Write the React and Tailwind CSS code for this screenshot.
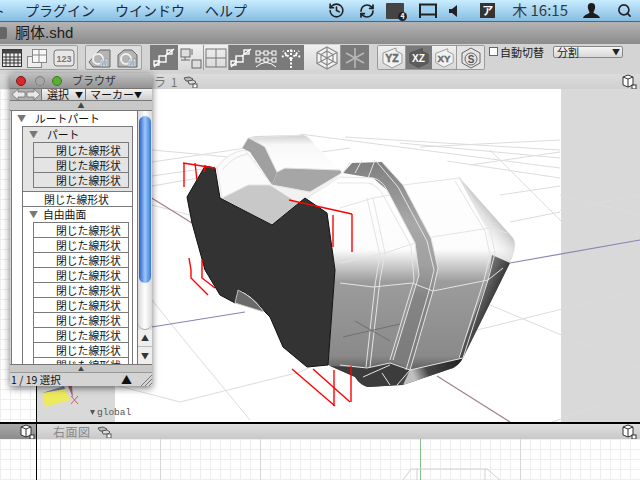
import React from 'react'
import { History, RefreshCw, Search } from 'lucide-react'

const JP = { fontFamily: '"Noto Sans CJK JP", "Liberation Sans", sans-serif' }

const LinkIcon = () => (
  <svg width="15" height="12" viewBox="0 0 15 12" fill="none" stroke="#555" strokeWidth="1">
    <path d="M1 2 L6 1 L10 3 L8 5 L3 5 Z" fill="#bbb" />
    <path d="M5 5 L10 4 L13 6 L11 8 L6 8 Z" fill="#ddd" />
    <rect x="10" y="8" width="4" height="4" fill="#fff" />
  </svg>
)

const CubeIcon = () => (
  <svg width="15" height="16" viewBox="0 0 15 16" fill="none" stroke="#333" strokeWidth="1">
    <path d="M1 3 L6 1 L11 3 L11 11 L6 13 L1 11 Z" fill="#fff" />
    <path d="M1 3 L6 5 L11 3 M6 5 L6 13" />
    <rect x="10" y="11" width="4" height="4" fill="#fff" />
  </svg>
)

const ToolBtn = ({ w = 25, dark, children }) => (
  <div
    style={{ width: w }}
    className={`h-full flex items-center justify-center border-r ${dark ? 'bg-[#7a7a7a] border-[#7a7a7a]' : 'bg-gradient-to-b from-[#f0f0f0] to-[#d8d8d8] border-[#9a9a9a]'}`}
  >
    {children}
  </div>
)

const NodeIcon = () => (
  <svg width="24" height="22" viewBox="0 0 24 22" fill="none" stroke="#fff" strokeWidth="1.4">
    <path d="M2 20 L8 14 M13 9 L22 2" />
    <rect x="7" y="9" width="7" height="6" />
    <rect x="15" y="3" width="5" height="4" />
    <rect x="2" y="14" width="5" height="4" />
  </svg>
)

const AxisIcon = ({ label, light }) => (
  <svg width="26" height="24" viewBox="0 0 26 24">
    <path d="M4 7 L17 2 L17 5 L23 8 L23 17 L13 22 L4 17 Z" fill={light ? '#5c5c5c' : '#f2f2f2'} stroke={light ? '#555' : '#999'} />
    <text x="13" y="16" textAnchor="middle" fontSize="10.5" fontWeight="700" fill={light ? '#fff' : '#777'} stroke={light ? 'none' : '#555'} strokeWidth="0.4" fontFamily="Liberation Sans">
      {label}
    </text>
  </svg>
)

const Toolbar = () => (
  <div className="h-[30px] bg-[#d4d4d4] flex pt-[1px] pb-[4px]" style={JP}>
    {/* group 1 */}
    <div className="w-[78px] h-full flex items-center border border-l-0 border-[#a0a0a0] rounded-r-[2px] bg-[#dedede] pl-[2px] gap-[5px]">
      <svg width="20" height="18" viewBox="0 0 20 18">
        <rect x="0.5" y="0.5" width="19" height="17" fill="#eee" stroke="#333" />
        <rect x="0.5" y="0.5" width="19" height="4" fill="#444" />
        <path d="M4 4 V18 M8 4 V18 M12 4 V18 M16 4 V18 M0 8 H20 M0 11 H20 M0 14 H20" stroke="#333" strokeWidth="1" />
      </svg>
      <svg width="20" height="20" viewBox="0 0 20 20" fill="#eee" stroke="#888">
        <rect x="0.5" y="8.5" width="14" height="11" />
        <rect x="5.5" y="1.5" width="14" height="13" fill="#f7f7f7" />
        <path d="M12 1 V14 M5 7 H20" />
      </svg>
      <svg width="22" height="18" viewBox="0 0 22 18" className="ml-[1px]">
        <rect x="1" y="1" width="20" height="16" rx="3" fill="#e8e8e8" stroke="#777" />
        <text x="11" y="13" fontSize="9" textAnchor="middle" fontFamily="Liberation Sans" fontWeight="700" fill="#777">123</text>
      </svg>
    </div>
    {/* group 2 */}
    <div className="w-[57px] ml-[7px] h-full flex items-center justify-center gap-[4px] border border-[#a0a0a0] rounded-[2px] bg-[#dedede]">
      {[0, 1].map((i) => (
        <svg key={i} width="24" height="22" viewBox="0 0 24 22">
          <path d={i === 0 ? 'M1 15 L12 3 L22 3 L22 20 L5 20 Z' : 'M2 8 L8 3 L16 3 L21 8 L21 20 L2 20 Z'} fill="#b4b4b4" stroke="#666" />
          <circle cx="10" cy="12" r="5" fill="none" stroke="#f0f0f0" strokeWidth="2" />
          <text x="16" y="20" fontSize="10" textAnchor="middle" fontWeight="700" fontFamily="Liberation Sans" fill="#fff" stroke="#555" strokeWidth="0.3">M</text>
        </svg>
      ))}
    </div>
    {/* group 3 */}
    <div className="ml-[8px] h-full flex bg-[#7a7a7a]">
      <ToolBtn w={28} dark><NodeIcon /></ToolBtn>
      <ToolBtn w={26}>
        <svg width="22" height="22" viewBox="0 0 22 22" fill="#ddd" stroke="#666">
          <rect x="1" y="2" width="9" height="8" />
          <rect x="12" y="13" width="9" height="8" />
          <path d="M1 13 H10 M12 8 V2 M5 10 V13" />
        </svg>
      </ToolBtn>
      <ToolBtn w={25}>
        <svg width="22" height="20" viewBox="0 0 22 20" fill="none" stroke="#777">
          <rect x="1" y="1" width="20" height="18" />
          <path d="M11 1 V19 M1 10 H21" />
        </svg>
      </ToolBtn>
      <ToolBtn w={25} dark><NodeIcon /></ToolBtn>
      <ToolBtn w={25} dark>
        <svg width="24" height="22" viewBox="0 0 24 22" fill="#7a7a7a" stroke="#fff">
          <path d="M2 6 H22 M2 13 H22 M2 20 Q12 11 22 20" fill="none" />
          <rect x="2" y="4" width="4" height="4" /><rect x="10" y="4" width="4" height="4" /><rect x="18" y="4" width="4" height="4" />
          <rect x="2" y="11" width="4" height="4" /><rect x="10" y="11" width="4" height="4" /><rect x="18" y="11" width="4" height="4" />
        </svg>
      </ToolBtn>
      <ToolBtn w={25} dark>
        <svg width="24" height="22" viewBox="0 0 24 22" fill="none" stroke="#fff" strokeWidth="2" strokeDasharray="2 1.5">
          <path d="M12 21 V10 M12 12 L4 4 M12 12 L20 4 M8 8 L2 10 M16 8 L22 10 M12 8 V2 M8 4 H16" />
        </svg>
      </ToolBtn>
      <ToolBtn w={37}>
        <svg width="24" height="24" viewBox="0 0 24 24" fill="#f4f4f4" stroke="#888" strokeWidth="1.2" className="ml-[10px]">
          <path d="M12 1 L22 6.5 L22 17.5 L12 23 L2 17.5 L2 6.5 Z" />
          <path d="M12 5 L18 8.5 L18 15.5 L12 19 L6 15.5 L6 8.5 Z M12 1 V23 M2 6.5 L22 17.5 M22 6.5 L2 17.5" />
        </svg>
      </ToolBtn>
      <ToolBtn w={28} dark>
        <svg width="20" height="22" viewBox="0 0 20 22" fill="none" stroke="#b8b8b8" strokeWidth="1.6">
          <path d="M10 1 V21 M1 6 L19 16 M19 6 L1 16" />
        </svg>
      </ToolBtn>
    </div>
    {/* group 4 */}
    <div className="ml-[8px] h-full flex border border-[#9a9a9a] rounded-[2px] overflow-hidden">
      <ToolBtn w={28}><AxisIcon label="YZ" /></ToolBtn>
      <ToolBtn w={26} dark><AxisIcon label="XZ" light /></ToolBtn>
      <ToolBtn w={25}><AxisIcon label="XY" /></ToolBtn>
      <div className="w-[27px] h-full flex items-center justify-center bg-[#e4e4e4]">
        <svg width="20" height="22" viewBox="0 0 20 22" fill="none" stroke="#666">
          <path d="M10 1 L19 6 L19 16 L10 21 L1 16 L1 6 Z" />
          <circle cx="10" cy="12" r="6" />
          <text x="10" y="15.5" fontSize="10" textAnchor="middle" fontWeight="700" stroke="none" fill="#555" fontFamily="Liberation Sans">S</text>
        </svg>
      </div>
    </div>
    {/* options */}
    <div className="ml-[4px] flex items-start pt-[1px] text-[11px] leading-[12px] text-[#222]">
      <div className="w-[9px] h-[9px] mt-[1px] border border-[#666] bg-white" />
      <span className="ml-[2px]">自動切替</span>
      <div className="ml-[9px] w-[70px] h-[12px] border border-[#888] rounded-[2px] bg-gradient-to-b from-[#f4f4f4] to-[#d8d8d8] flex items-center justify-between pl-[3px] pr-[2px]">
        <span>分割</span>
        <span className="text-[8px] leading-[8px]">▼</span>
      </div>
    </div>
  </div>
)

const MenuBar = () => (
  <div className="h-[22px] bg-gradient-to-b from-[#c8ecff] to-[#86bde2] border-b border-[#3e6a8a] relative flex items-center text-[14px] text-[#1a2a3a]" style={JP}>
    <span className="w-[16px] shrink-0 -ml-[9px]">ト</span>
    <span className="ml-[18px]">プラグイン</span>
    <span className="ml-[20px]">ウインドウ</span>
    <span className="ml-[20px]">ヘルプ</span>
    <div className="ml-auto flex items-center text-[#222]">
      <History size={17} strokeWidth={2.2} className="mr-[14px]" />
      <RefreshCw size={16} strokeWidth={2.6} className="mr-[11px]" />
      <div className="w-[18px] h-[16px] bg-[#444] rounded-[1px] relative mr-[15px]">
        <span className="absolute -right-[3px] -bottom-[2px] w-[9px] h-[9px] rounded-full bg-[#222] text-white text-[7px] leading-[9px] text-center font-bold">4</span>
      </div>
      <svg width="18" height="16" viewBox="0 0 18 16" className="mr-[12px]">
        <rect x="1" y="1.5" width="16" height="10" fill="#9fd0ee" stroke="#222" strokeWidth="2" />
        <path d="M1 12 V15 M17 12 V15" stroke="#222" strokeWidth="2" />
      </svg>
      <svg width="8" height="12" viewBox="0 0 8 12" className="mr-[23px]"><path d="M0 4 H3 L8 0 V12 L3 8 H0 Z" fill="#222" /></svg>
      <div className="w-[15px] h-[15px] bg-[#333] text-white text-[11px] leading-[15px] text-center font-bold mr-[17px]">ア</div>
      <span className="text-[#303a44] text-[15px] mr-[15px] whitespace-nowrap">木 16:15</span>
      <svg width="17" height="15" viewBox="0 0 17 15" className="mr-[17px]"><path d="M8.5 0 C12 0 12.5 3 12 5.5 C11.5 7.5 10.5 8.5 10.5 9.5 C11 11 16 11.5 17 15 H0 C1 11.5 6 11 6.5 9.5 C6.5 8.5 5.5 7.5 5 5.5 C4.5 3 5 0 8.5 0 Z" fill="#1c1c1c" /></svg>
      <Search size={15} strokeWidth={2.6} className="mr-[8px]" />
    </div>
  </div>
)

const FINE = []
for (let i = 0; i < 64; i++) FINE.push(i * 10)

const GridLines = ({ h }) => (
  <g stroke="#eeeeee" strokeWidth="1">
    {FINE.map((v) => (
      <line key={'v' + v} x1={v + 0.5} y1="0" x2={v + 0.5} y2={h} />
    ))}
    {FINE.map((v) => (
      <line key={'h' + v} x1="0" y1={v + 0.5} x2="640" y2={v + 0.5} />
    ))}
  </g>
)

const FLOOR = [
  'M152 176 L350 148', 'M152 162 L300 140', 'M152 186 L210 176', 'M300 134 L560 168', 'M345 137 L560 150', 'M400 143 L560 158',
  'M420 147 L560 140', 'M440 160 L560 178', 'M470 165 L560 152', 'M500 195 L560 186', 'M510 222 L560 212', 'M152 150 L240 158',
  'M152 205 L190 215', 'M490 305 L640 368', 'M477 330 L640 290', 'M490 150 L640 300', 'M550 423 L640 390', 'M180 402 L300 372',
  'M115 385 L180 402', 'M180 335 L250 420', 'M300 372 L355 345', 'M152 300 L180 335', 'M560 195 L640 215', 'M560 210 L640 195',
]

const WIRES = [
  // rear bump and trough
  'M217 167 Q228 152 245 150 L272 185', 'M222 170 Q233 156 248 154', 'M222 198 L248 185 L270 185 L298 203', 'M222 198 Q219 180 217 167',
  'M242 148 L248 138 L303 135', 'M252 138 L265 147 L277 172', 'M277 172 L285 168 L340 170', 'M272 185 L310 192 L342 173',
  // front section
  'M307 198 L340 177 L373 178 Q382 180 387 190 L415 243 L419 275 L393 360',
  'M337 183 L368 183 Q378 185 383 195 L411 246 L414 280 L390 360',
  'M350 162 L343 173', 'M362 160 L355 173', 'M375 160 L368 178',
  'M340 208 L373 198 L390 195', 'M373 198 L385 253 L380 280 L370 367', 'M367 198 L380 255 L375 285 L366 367',
  'M340 263 L385 253 L415 243', 'M340 283 L373 287 L412 283 L433 291 L488 280 L503 268',
  // rear section
  'M382 162 L403 185 L431 238 L438 268 L433 291 L410 370', 'M376 161 L398 187 L427 241 L434 270 L429 291 L406 370',
  'M403 185 L460 178 L490 228 L495 253 L488 280 L463 358', 'M455 181 L485 231 L490 255 L484 280 L459 358',
  'M432 237 L490 228 L507 233',
  // bottom
  'M340 365 L367 368 L390 363 L410 370 L463 358', 'M363 377 L390 365', 'M382 373 L390 385', 'M410 370 L397 385',
  // notch
  'M238 292 L235 303 L264 312', 'M237 298 L260 305', 'M244 292 L240 304',
]

const REDS = [
  'M183 163 L215 168', 'M184 163 V187', 'M195 163 L197 180', 'M205 165 L204 172', 'M289 200 L352 214', 'M333 215 V247', 'M352 214 V252',
  'M189 258 L191 270 L191 278 L208 295', 'M202 260 V278 L215 288', 'M292 369 L335 406', 'M313 369 L350 402', 'M334 370 V406', 'M351 366 V402',
]

// 3D model view, drawn in page coordinates
const ModelView = () => (
  <svg width="603" height="333" viewBox="37 89 603 333" className="block">
    <defs>
      <linearGradient id="bodyShade" x1="0" y1="157" x2="0" y2="388" gradientUnits="userSpaceOnUse">
        <stop offset="0" stopColor="#ffffff" />
        <stop offset="0.4" stopColor="#fcfcfc" />
        <stop offset="0.54" stopColor="#9c9c9c" />
        <stop offset="0.86" stopColor="#8a8a8a" />
        <stop offset="0.93" stopColor="#5a5a5a" />
        <stop offset="1" stopColor="#3a3a3a" />
      </linearGradient>
      <linearGradient id="bandShade" x1="0" y1="160" x2="0" y2="370" gradientUnits="userSpaceOnUse">
        <stop offset="0" stopColor="#7e7e7e" />
        <stop offset="0.3" stopColor="#a8a8a8" />
        <stop offset="0.5" stopColor="#a0a0a0" />
        <stop offset="0.65" stopColor="#858585" />
        <stop offset="1" stopColor="#7a7a7a" />
      </linearGradient>
      <linearGradient id="edgeTop" x1="472" y1="232" x2="512" y2="198" gradientUnits="userSpaceOnUse">
        <stop offset="0" stopColor="#ffffff" stopOpacity="0" />
        <stop offset="0.55" stopColor="#c0c0c0" />
        <stop offset="1" stopColor="#808080" />
      </linearGradient>
      <linearGradient id="edgeLow" x1="468" y1="298" x2="492" y2="309" gradientUnits="userSpaceOnUse">
        <stop offset="0" stopColor="#8a8a8a" />
        <stop offset="1" stopColor="#303030" />
      </linearGradient>
      <linearGradient id="bumpShade" x1="0" y1="135" x2="0" y2="175" gradientUnits="userSpaceOnUse">
        <stop offset="0" stopColor="#d0d0d0" />
        <stop offset="0.25" stopColor="#f8f8f8" />
        <stop offset="1" stopColor="#ffffff" />
      </linearGradient>
      <linearGradient id="bottomShade" x1="412" y1="372" x2="458" y2="352" gradientUnits="userSpaceOnUse">
        <stop offset="0" stopColor="#c0c0c0" />
        <stop offset="0.3" stopColor="#444" />
        <stop offset="1" stopColor="#222" />
      </linearGradient>
    </defs>
    <rect x="37" y="89" width="603" height="333" fill="#fff" />
    <rect x="37" y="89" width="78" height="333" fill="#d9d9d9" />
    <rect x="561" y="89" width="79" height="333" fill="#d9d9d9" />
    <g stroke="#dcdcdc" fill="none">
      {FLOOR.map((d) => <path key={d} d={d} />)}
    </g>
    <path d="M40 345 L245 312 M510 263 L640 240" stroke="#8a84b4" strokeWidth="1.2" />
    <path d="M150 197 L192 223 M437 376 L510 422" stroke="#a5808a" strokeWidth="1.2" />

    {/* rear bump */}
    <path d="M242 148 L248 138 Q250 137 256 136 L303 135 Q310 137 314 144 L342 172 L310 200 L272 186 L250 153 Z" fill="url(#bumpShade)" />
    <path d="M242 148 L248 138 L265 147 L277 172 L272 185 L250 152 Z" fill="#a0a0a0" />
    <path d="M277 172 L285 168 L340 170 L342 173 L310 192 L272 185 Z" fill="#a6a6a6" />
    <path d="M222 198 L248 185 L270 185 L298 203 L272 225 Z" fill="#c8c8c8" />
    <path d="M217 167 Q228 152 245 150 L272 185 L248 185 L222 198 Z" fill="#fbfbfb" />
    <path d="M272 185 L310 192 L342 173 L340 177 L307 198 L298 203 Z" fill="#f2f2f2" />

    {/* right block */}
    <path d="M307 198 L338 177 L348 163 Q357 157 372 157 L440 157 Q448 158 455 172 L513 238 Q518 245 510 263 L463 358 Q458 367 450 369 L403 385 L368 387 Q360 385 355 377 L328 365 L335 270 L327 213 Z" fill="url(#bodyShade)" />
    <path d="M352 163 L382 162 L403 185 L431 238 L438 268 L433 291 L410 370 L393 360 L419 275 L415 243 L387 190 L373 178 L343 173 Z" fill="url(#bandShade)" />
    <path d="M458 176 L513 238 Q518 245 510 263 L490 255 L487 230 Z" fill="url(#edgeTop)" />
    <path d="M510 263 L463 358 L458 358 L488 280 L492 255 Z" fill="url(#edgeLow)" />
    <path d="M410 370 L463 358 Q458 367 450 369 L403 385 Z" fill="url(#bottomShade)" />
    <path d="M330 366 L355 377 Q360 385 368 387 L397 385 L410 370 L390 363 L367 368 Z" fill="#3c3c3c" />
    <g stroke="#e4e4e4" strokeWidth="1" fill="none">
      {WIRES.map((d) => <path key={d} d={d} />)}
    </g>
    <path d="M355 321 L390 341 M343 337 L400 324" stroke="#707070" fill="none" />

    {/* cut face */}
    <path d="M205 166 L215 168 L220 198 L272 225 L305 198 L327 213 L335 270 L328 365 L307 367 L283 347 L270 317 L265 312 Q250 292 238 290 L235 303 L220 295 L205 270 L192 223 L187 197 Z" fill="#333333" stroke="#111" strokeWidth="1" />
    <path d="M238 290 Q252 296 264 312 L235 303 Z" fill="#6a6a6a" stroke="#ddd" strokeWidth="0.8" />

    <g stroke="#ff0000" strokeWidth="1.4" fill="none">
      {REDS.map((d) => <path key={d} d={d} />)}
    </g>

    {/* axis marker */}
    <path d="M42 393 L65 389 L70 400 L45 407 Z" fill="#eeea5e" />
    <path d="M42 393 L64 386 L65 389 Z" fill="#7a78a8" />
    <path d="M68 386 L72 386 L73 398 Z" fill="#a5606a" />
    <path d="M71 396 L78 404 M78 396 L71 404" stroke="#d06060" />
    <path d="M90 410 L95 410 L92.5 415 Z" fill="#555" />
    <text x="97" y="415" fontSize="9.5" fill="#555" fontFamily="Liberation Mono">global</text>
  </svg>
)

const ROW = 'h-[15px] border-b border-[#7a7a7a] flex items-center pl-[22px] whitespace-nowrap'
const TRI = 'text-[9px] leading-[9px] text-[#777]'
const SHAPE = '閉じた線形状'

const BrowserWindow = () => (
  <div className="absolute left-[10px] top-[73px] w-[142px] h-[313px] bg-[#d4d4d4] flex flex-col shadow-[0_2px_7px_rgba(0,0,0,0.55)] text-[11px] text-[#111]" style={JP}>
    <div className="h-[15px] shrink-0 bg-gradient-to-b from-[#c0c0c0] to-[#949494] flex items-center pl-[6px] rounded-t-[2px]">
      <span className="w-[10px] h-[10px] rounded-full bg-[#d8282c] border border-[#7a1a1a]" />
      <span className="ml-[9px] w-[10px] h-[10px] rounded-full bg-[#a8a8a8] border border-[#808080]" />
      <span className="ml-[7px] w-[10px] h-[10px] rounded-full bg-[#58b030] border border-[#3a7a1e]" />
      <span className="ml-[10px] text-[#333]">ブラウザ</span>
    </div>
    <div className="h-[13px] shrink-0 flex bg-gradient-to-b from-[#f2f2f2] to-[#cfcfcf] border-y border-[#777] items-center text-[11px] leading-[11px] whitespace-nowrap">
      <div className="w-[32px] h-full bg-[#b0b0b0] flex items-center justify-center border-r border-[#777]">
        <svg width="28" height="11" viewBox="0 0 28 11"><path d="M0 5.5 L6 0 V3 H13 V8 H6 V11 Z M28 5.5 L22 0 V3 H15 V8 H22 V11 Z" fill="#e8e8e8" stroke="#666" strokeWidth="0.7" /></svg>
      </div>
      <span className="ml-[5px]">選択</span>
      <span className="ml-[6px] text-[8px]">▼</span>
      <div className="ml-[2px] h-full border-l border-[#777] pl-[4px] flex items-center w-[60px]">マーカー<span className="ml-auto mr-[3px] text-[8px]">▼</span></div>
    </div>
    <div className="h-[9px] shrink-0 flex justify-center items-center text-[7px] leading-[7px] text-[#444] bg-[#c8c8c8]">▲</div>
    <div className="flex-1 min-h-0 flex border-y border-[#777] overflow-hidden">
      {/* tree */}
      <div className="w-[127px] ml-[1px] shrink-0 bg-white border-x border-[#777] overflow-hidden text-[10.8px] leading-[15px]">
        <div className="h-[15px] flex items-center pl-[5px]"><span className={TRI}>▼</span><span className="ml-[9px]">ルートパート</span></div>
        <div className="ml-[10px] mr-[4px] border-x border-[#777]">
          <div className="bg-[#e4e4e4] border-y border-[#7a7a7a] pl-[10px] pr-[3px] pb-[3px]">
            <div className="h-[15px] flex items-center -ml-[4px]"><span className={TRI}>▼</span><span className="ml-[9px]">パート</span></div>
            <div className="border-t border-x border-[#7a7a7a]">
              {[0, 1, 2].map((i) => <div key={i} className={ROW}>{SHAPE}</div>)}
            </div>
          </div>
          <div className="h-[15px] flex items-center pl-[21px] border-b border-[#7a7a7a]">{SHAPE}</div>
          <div className="h-[15px] flex items-center pl-[6px]"><span className={TRI}>▼</span><span className="ml-[5px]">自由曲面</span></div>
          <div className="ml-[10px] mr-[3px] border-t border-x border-[#7a7a7a]">
            {[...Array(10)].map((_, i) => <div key={i} className={ROW}>{SHAPE}</div>)}
          </div>
        </div>
      </div>
      {/* scroll bar */}
      <div className="w-[14px] flex flex-col bg-gradient-to-r from-[#d8d8d8] via-[#ffffff] to-[#d8d8d8]">
        <div className="h-[167px] mt-[5px] mx-[1px] rounded-full bg-gradient-to-r from-[#2a5cc0] via-[#9cc8fa] to-[#3a78d8]" />
        <div className="flex-1 rounded-b-full border-b border-[#aaa]" />
        <div className="h-[17px] flex items-center justify-center text-[8px] leading-[8px] text-[#333] bg-[#eee] border-b border-[#bbb]">▲</div>
        <div className="h-[17px] flex items-center justify-center text-[8px] leading-[8px] text-[#333] bg-[#eee]">▼</div>
      </div>
    </div>
    <div className="h-[7px] shrink-0 flex justify-center items-center text-[6px] leading-[6px] text-[#444] bg-[#c8c8c8]">▲</div>
    <div className="h-[14px] shrink-0 flex items-center pl-[1px] text-[10.5px] border-t border-[#999]">
      <span>1 / 19 選択</span>
      <span className="ml-auto text-[11px] leading-[11px]">▲</span>
      <svg width="12" height="12" viewBox="0 0 12 12" className="ml-[8px]" stroke="#777" fill="none"><path d="M1 12 L12 1 M5 12 L12 5 M9 12 L12 9" /></svg>
    </div>
  </div>
)

export default function App() {
  return (
    <div className="relative w-[640px] h-[480px] overflow-hidden bg-white flex flex-col" style={JP}>
      <MenuBar />

      {/* document title */}
      <div className="h-[22px] bg-gradient-to-b from-[#b4b4b4] to-[#8c8c8c] flex items-center text-[15px] text-[#1c1c1c]">
        <div className="w-[7px] h-[12px] bg-[#666] rounded-r-[2px]" />
        <span className="ml-[8px]" style={{ fontFamily: '"Liberation Sans", "Noto Sans CJK JP", sans-serif' }}>胴体.shd</span>
      </div>

      <Toolbar />

      {/* perspective view header */}
      <div className="h-[15px] bg-gradient-to-b from-[#dcdcdc] to-[#d0d0d0] flex items-center text-[12px] text-[#777]">
        <span className="ml-[128px] tracking-[1px]">カメラ 1</span>
        <span className="ml-[5px]"><LinkIcon /></span>
        <span className="ml-auto mr-[3px]"><CubeIcon /></span>
      </div>

      {/* perspective view */}
      <div className="h-[333px] flex">
        <svg width="36" height="333" className="block shrink-0"><GridLines h={333} /></svg>
        <div className="w-[1px] bg-black" />
        <ModelView />
      </div>

      {/* side view */}
      <div className="h-[2px] bg-black" />
      <div className="h-[15px] flex items-center text-[12px] text-[#888]">
        <div className="w-[37px] h-full bg-gradient-to-b from-[#a8a8a8] to-[#8c8c8c] border-r border-black flex justify-end items-center pr-[1px]"><CubeIcon /></div>
        <div className="flex-1 h-full bg-gradient-to-b from-[#e0e0e0] to-[#c8c8c8] flex items-center">
          <span className="ml-[16px] tracking-[0.5px]">右面図</span>
          <span className="ml-[6px]"><LinkIcon /></span>
          <span className="ml-auto mr-[3px]"><CubeIcon /></span>
        </div>
      </div>
      <div className="flex-1 relative">
        <svg width="640" height="41" className="block">
          <GridLines h={41} />
          <path d="M60.5 0 V41 M160.5 0 V41 M260.5 0 V41 M520.5 0 V41" stroke="#d8d8d8" />
          <path d="M36.5 0 V41" stroke="#000" />
          <path d="M420.5 0 V41" stroke="#86c088" />
          <path d="M403 41 L411 30 H487 L500 41 M417 30 V41 M485 30 V41" stroke="#cfcfcf" fill="none" />
        </svg>
      </div>

      <BrowserWindow />
    </div>
  )
}
